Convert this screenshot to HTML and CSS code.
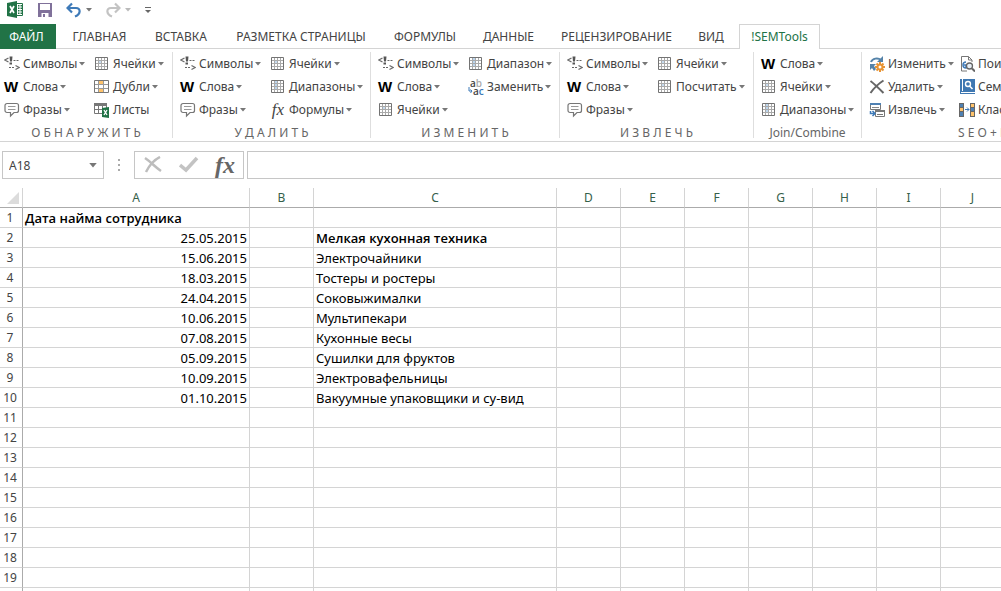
FILE: index.html
```html
<!DOCTYPE html>
<html lang="ru">
<head>
<meta charset="utf-8">
<title>Excel – !SEMTools</title>
<link rel="stylesheet" href="styles.css">
</head>
<body>
<svg class="sprite" aria-hidden="true">
  <symbol id="chars" viewBox="0 0 16 16"><path d="M4.500 2 0.800 4 4.500 6M11.500 9.500 15.200 11.500 11.500 13.500" fill="none" stroke="#6a6a6a" stroke-width="1.300"/><path d="M5.500 0.500h3l-.5 5h-2zM5.500 6.500H8v2H5.500z" fill="#555"/><path d="M9.500 4h2v1h-2zM12.500 4h2v1h-2zM5 11h2v1H5zM8 11h2v1H8z" fill="#666"/></symbol>
  <symbol id="phrase" viewBox="0 0 16 16"><path d="M3 1.500h9.500a2 2 0 0 1 2 2v5a2 2 0 0 1-2 2H10L6.500 14v-3.500H3a2 2 0 0 1-2-2v-5a2 2 0 0 1 2-2z" fill="#fff" stroke="#777" stroke-width="1.200"/><path d="M4 4.500h7.500M4 7.500h7.500" stroke="#999"/></symbol>
  <symbol id="cells" viewBox="1 0 16 16"><path d="M2 1h12v13H2z" fill="#fff"/><path d="M5 4h4v4H5z" fill="#c7dcf0"/><path d="M5.500 2v11M8.500 2v11M11.500 2v11M3 4.500h11M3 7.500h11M3 10.500h11" stroke="#aaa"/><path d="M2.500 1.500h12v12h-12z" fill="none" stroke="#737373"/></symbol>
  <symbol id="range" viewBox="1 0 16 16"><path d="M2 1h12v13H2z" fill="#fff"/><path d="M5 2h4v9H5z" fill="#bcd6ee"/><path d="M5.500 2v11M8.500 2v11M11.500 2v11M3 4.500h11M3 7.500h11M3 10.500h11" stroke="#aaa"/><path d="M2.500 1.500h12v12h-12z" fill="none" stroke="#737373"/></symbol>
  <symbol id="dupes" viewBox="1 0 16 16"><path d="M1.500 1.500h14v12h-14z" fill="#fff"/><path d="M6 2h5v3H6zM6 10h5v3H6z" fill="#ffc36b"/><path d="M5.500 2v11M10.500 2v11M2 5.500h13M2 9.500h13" stroke="#999"/><path d="M1.500 1.500h14v12h-14z" fill="none" stroke="#777"/></symbol>
  <symbol id="sheets" viewBox="1 0 16 16"><path d="M1.500 1.500h12v10h-12z" fill="#fff" stroke="#777"/><path d="M1 1h13v3H1z" fill="#777"/><path d="M5.500 4v7M9.500 4v7M1 7.500h12" stroke="#777"/><path d="M9 6l7-1v11l-7-1z" fill="#217346"/><path d="M11 8l3 5M14 8l-3 5" stroke="#fff" stroke-width="1.300"/></symbol>
  <symbol id="excel" viewBox="0 0 17 17"><path d="M9.500 2.500h6v12h-6z" fill="#fff" stroke="#217346"/><path d="M11 4h1.500v1.500H11zM13.500 4H15v1.500h-1.500zM11 6.500h1.500V8H11zM13.500 6.500H15V8h-1.500zM11 9h1.500v1.500H11zM13.500 9H15v1.500h-1.500zM11 11.500h1.500V13H11zM13.500 11.500H15V13h-1.500z" fill="#217346"/><path d="M0 2l10-2v17L0 15z" fill="#217346"/><path d="M3 5l4 7M7 5l-4 7" stroke="#fff" stroke-width="1.700"/></symbol>
  <symbol id="save" viewBox="0 0 16 16"><path d="M1 1h14v14H1z" fill="#80719a"/><path d="M3 2h10v6H3zM4.500 11h7v4h-7z" fill="#fff"/><path d="M6 12h2v3H6z" fill="#80719a"/></symbol>
  <symbol id="undo" viewBox="0 0 16 16"><path d="M1.500 6H10c5 0 5 6-1 8.500" fill="none" stroke="#3e7ab8" stroke-width="2.200"/><path d="M6 1.500 1.500 6 6 10.500" fill="none" stroke="#3e7ab8" stroke-width="2.200"/></symbol>
  <symbol id="redo" viewBox="0 0 16 16"><path d="M14.500 6H6c-5 0-5 6 1 8.500" fill="none" stroke="#c3c3c3" stroke-width="2.200"/><path d="M10 1.500 14.500 6 10 10.500" fill="none" stroke="#c3c3c3" stroke-width="2.200"/></symbol>
  <symbol id="custom" viewBox="0 0 8 8"><path d="M1 1.500h6" stroke="#666"/><path d="M1 4h6L4 7z" fill="#666"/></symbol>
  <symbol id="caret" viewBox="0 0 6 4"><path d="M0 0h6L3 3.500z" fill="#777"/></symbol>
  <symbol id="cycle" viewBox="0 0 16 16"><path d="M2 6a6 5 0 0 1 10-2" fill="none" stroke="#5583a9" stroke-width="2"/><path d="M14 0v6H8z" fill="#5583a9"/><path d="M1 8h6L5 10l2 3-2 2-2-3-2 2z" fill="#5583a9"/><path d="M11 6v10M6 11h10M7.500 7.500l7 7M14.500 7.500l-7 7" stroke="#e89434" stroke-width="2"/><circle cx="11" cy="11" r="3.500" fill="#e89434"/><circle cx="11" cy="11" r="1.500" fill="#fff"/></symbol>
  <symbol id="delete" viewBox="0 0 16 16"><path d="M1.500 2c4 3 8 7 13 12" fill="none" stroke="#666" stroke-width="2"/><path d="M14.500 1.500C9 5 5 9 1.500 14" fill="none" stroke="#666" stroke-width="2"/></symbol>
  <symbol id="extract" viewBox="0 0 16 16"><path d="M1.500 1.500h10v6h-10z" fill="#fff" stroke="#777"/><path d="M1 1h11v2H1z" fill="#4f81b3"/><path d="M3 5.500h7" stroke="#888"/><path d="M6.500 8.500h9v6h-9z" fill="#fff" stroke="#777"/><path d="M6 8h10v2H6zM8 12h6v1H8z" fill="#777"/><path d="M1.500 9v2.500H5M3.500 9 6 11.500 3.500 14" fill="none" stroke="#3e7ab8" stroke-width="1.500"/></symbol>
  <symbol id="find" viewBox="0 0 16 16"><path d="M8 15H2.500V.5h7L13 4v2M9.500.5V4H13" fill="none" stroke="#777"/><path d="M7 6a3 3 0 0 0 0 6V9H5" fill="none" stroke="#3e7ab8" stroke-width="1.500"/><circle cx="10.500" cy="10" r="3" fill="#e7eff7" stroke="#666" stroke-width="1.300"/><path d="M13 12.500l3 3" stroke="#666" stroke-width="2"/></symbol>
  <symbol id="book" viewBox="0 0 16 16"><path d="M1 0h15v15H1z" fill="#3f78b2"/><path d="M3.500 0v12M2 13.500h14" stroke="#fff"/><circle cx="9" cy="5" r="2.500" fill="none" stroke="#fff" stroke-width="1.400"/><path d="M10.500 7l3 3" stroke="#fff" stroke-width="1.600"/></symbol>
  <symbol id="classify" viewBox="0 0 16 16"><path d="M0 1h5v14H0zM11 1h5v14h-5z" fill="#666"/><path d="M1 2h3v3H1zM1 10h3v4H1zM12 6h3v3h-3z" fill="#4f81b3"/><path d="M1 6h3v3H1zM12 2h3v3h-3zM12 10h3v4h-3z" fill="#ffc36b"/><path d="M6 7.500h4M8 5.500l2 2-2 2" fill="none" stroke="#3e7ab8"/></symbol>
  <symbol id="arrow" viewBox="0 0 5 7"><path d="M1 0v4h3M2.500 2.500 4 4 2.500 6" fill="none" stroke="#3e7ab8"/></symbol>
  <symbol id="cancel" viewBox="0 0 18 18"><path d="M1 2c6 4 10 9 16 13M16 1C10 4 5 10 2 16" fill="none" stroke="#bdbdbd" stroke-width="2.500"/></symbol>
  <symbol id="enter" viewBox="0 0 20 18"><path d="M1 9l6 5L18 2" fill="none" stroke="#c3c3c3" stroke-width="3.500"/></symbol>
</svg>

<div class="window">
  <div class="quick">
    <svg class="excel"><use href="#excel"/></svg>
    <button class="tool" aria-label="Сохранить"><svg class="icon"><use href="#save"/></svg></button>
    <button class="tool" aria-label="Отменить"><svg class="icon"><use href="#undo"/></svg><svg class="caret"><use href="#caret"/></svg></button>
    <button class="tool" aria-label="Вернуть"><svg class="icon"><use href="#redo"/></svg><svg class="caret dim"><use href="#caret"/></svg></button>
    <button class="tool" aria-label="Настройка панели"><svg class="custom"><use href="#custom"/></svg></button>
  </div>

  <nav class="tabs">
    <button class="tab file">ФАЙЛ</button>
    <button class="tab">ГЛАВНАЯ</button>
    <button class="tab">ВСТАВКА</button>
    <button class="tab">РАЗМЕТКА СТРАНИЦЫ</button>
    <button class="tab">ФОРМУЛЫ</button>
    <button class="tab">ДАННЫЕ</button>
    <button class="tab">РЕЦЕНЗИРОВАНИЕ</button>
    <button class="tab">ВИД</button>
    <button class="tab active">!SEMTools</button>
  </nav>

  <div class="ribbon">
    <section class="group detect">
      <div class="commands">
        <button class="cmd"><svg class="icon"><use href="#chars"/></svg>Символы<svg class="caret"><use href="#caret"/></svg></button>
        <button class="cmd"><b class="icon word">W</b>Слова<svg class="caret"><use href="#caret"/></svg></button>
        <button class="cmd"><svg class="icon"><use href="#phrase"/></svg>Фразы<svg class="caret"><use href="#caret"/></svg></button>
        <button class="cmd"><svg class="icon"><use href="#cells"/></svg>Ячейки<svg class="caret"><use href="#caret"/></svg></button>
        <button class="cmd"><svg class="icon"><use href="#dupes"/></svg>Дубли<svg class="caret"><use href="#caret"/></svg></button>
        <button class="cmd"><svg class="icon"><use href="#sheets"/></svg>Листы</button>
      </div>
      <div class="caption">О Б Н А Р У Ж И Т Ь</div>
    </section>
    <section class="group remove">
      <div class="commands">
        <button class="cmd"><svg class="icon"><use href="#chars"/></svg>Символы<svg class="caret"><use href="#caret"/></svg></button>
        <button class="cmd"><b class="icon word">W</b>Слова<svg class="caret"><use href="#caret"/></svg></button>
        <button class="cmd"><svg class="icon"><use href="#phrase"/></svg>Фразы<svg class="caret"><use href="#caret"/></svg></button>
        <button class="cmd"><svg class="icon"><use href="#cells"/></svg>Ячейки<svg class="caret"><use href="#caret"/></svg></button>
        <button class="cmd"><svg class="icon"><use href="#range"/></svg>Диапазоны<svg class="caret"><use href="#caret"/></svg></button>
        <button class="cmd"><i class="icon fx">fx</i>Формулы<svg class="caret"><use href="#caret"/></svg></button>
      </div>
      <div class="caption">У Д А Л И Т Ь</div>
    </section>
    <section class="group change">
      <div class="commands">
        <button class="cmd"><svg class="icon"><use href="#chars"/></svg>Символы<svg class="caret"><use href="#caret"/></svg></button>
        <button class="cmd"><b class="icon word">W</b>Слова<svg class="caret"><use href="#caret"/></svg></button>
        <button class="cmd"><svg class="icon"><use href="#cells"/></svg>Ячейки<svg class="caret"><use href="#caret"/></svg></button>
        <button class="cmd"><svg class="icon"><use href="#range"/></svg>Диапазон<svg class="caret"><use href="#caret"/></svg></button>
        <button class="cmd"><span class="icon replace"><span>a<span class="pale">b</span></span><span class="under"><svg class="arrow"><use href="#arrow"/></svg>a<span class="blue">c</span></span></span>Заменить<svg class="caret"><use href="#caret"/></svg></button>
      </div>
      <div class="caption">И З М Е Н И Т Ь</div>
    </section>
    <section class="group pull">
      <div class="commands">
        <button class="cmd"><svg class="icon"><use href="#chars"/></svg>Символы<svg class="caret"><use href="#caret"/></svg></button>
        <button class="cmd"><b class="icon word">W</b>Слова<svg class="caret"><use href="#caret"/></svg></button>
        <button class="cmd"><svg class="icon"><use href="#phrase"/></svg>Фразы<svg class="caret"><use href="#caret"/></svg></button>
        <button class="cmd"><svg class="icon"><use href="#cells"/></svg>Ячейки<svg class="caret"><use href="#caret"/></svg></button>
        <button class="cmd"><svg class="icon"><use href="#cells"/></svg>Посчитать<svg class="caret"><use href="#caret"/></svg></button>
      </div>
      <div class="caption">И З В Л Е Ч Ь</div>
    </section>
    <section class="group join">
      <div class="commands">
        <button class="cmd"><b class="icon word">W</b>Слова<svg class="caret"><use href="#caret"/></svg></button>
        <button class="cmd"><svg class="icon"><use href="#cells"/></svg>Ячейки<svg class="caret"><use href="#caret"/></svg></button>
        <button class="cmd"><svg class="icon"><use href="#range"/></svg>Диапазоны<svg class="caret"><use href="#caret"/></svg></button>
      </div>
      <div class="caption">Join/Combine</div>
    </section>
    <section class="group seo">
      <div class="commands">
        <button class="cmd"><svg class="icon"><use href="#cycle"/></svg>Изменить<svg class="caret"><use href="#caret"/></svg></button>
        <button class="cmd"><svg class="icon"><use href="#delete"/></svg>Удалить<svg class="caret"><use href="#caret"/></svg></button>
        <button class="cmd"><svg class="icon"><use href="#extract"/></svg>Извлечь<svg class="caret"><use href="#caret"/></svg></button>
        <button class="cmd"><svg class="icon"><use href="#find"/></svg>Поиск</button>
        <button class="cmd"><svg class="icon"><use href="#book"/></svg>Семантика</button>
        <button class="cmd"><svg class="icon"><use href="#classify"/></svg>Классификация</button>
      </div>
      <div class="caption">S E O + К</div>
    </section>
  </div>

  <div class="formula-bar">
    <div class="name-box"><input class="name" aria-label="Имя ячейки" value="A18"><button class="drop" aria-label="Список имён"><svg><use href="#caret"/></svg></button></div>
    <div class="grip"><i></i><i></i><i></i></div>
    <div class="edit">
      <button aria-label="Отмена"><svg class="cancel"><use href="#cancel"/></svg></button>
      <button aria-label="Ввод"><svg class="enter"><use href="#enter"/></svg></button>
      <button class="insert">fx</button>
    </div>
    <input class="formula" aria-label="Строка формул">
  </div>

  <div class="sheet">
    <table class="grid">
      <colgroup><col class="c-num"><col class="c-a"><col class="c-b"><col class="c-c"><col span="10" class="c-n"></colgroup>
      <thead><tr><th class="corner"><svg viewBox="0 0 12 12"><path d="M12 0v12H0z" fill="#dcdcdc"/></svg></th><th>A</th><th>B</th><th>C</th><th>D</th><th>E</th><th>F</th><th>G</th><th>H</th><th>I</th><th>J</th><th>K</th><th>L</th><th>M</th></tr></thead>
      <tbody>
        <tr><th>1<td class="strong">Дата найма сотрудника<td><td><td><td><td><td><td><td><td><td><td><td></tr>
        <tr><th>2<td class="date">25.05.2015<td><td class="strong">Мелкая кухонная техника<td><td><td><td><td><td><td><td><td><td></tr>
        <tr><th>3<td class="date">15.06.2015<td><td>Электрочайники<td><td><td><td><td><td><td><td><td><td></tr>
        <tr><th>4<td class="date">18.03.2015<td><td>Тостеры и ростеры<td><td><td><td><td><td><td><td><td><td></tr>
        <tr><th>5<td class="date">24.04.2015<td><td>Соковыжималки<td><td><td><td><td><td><td><td><td><td></tr>
        <tr><th>6<td class="date">10.06.2015<td><td>Мультипекари<td><td><td><td><td><td><td><td><td><td></tr>
        <tr><th>7<td class="date">07.08.2015<td><td>Кухонные весы<td><td><td><td><td><td><td><td><td><td></tr>
        <tr><th>8<td class="date">05.09.2015<td><td>Сушилки для фруктов<td><td><td><td><td><td><td><td><td><td></tr>
        <tr><th>9<td class="date">10.09.2015<td><td>Электровафельницы<td><td><td><td><td><td><td><td><td><td></tr>
        <tr><th>10<td class="date">01.10.2015<td><td>Вакуумные упаковщики и су-вид<td><td><td><td><td><td><td><td><td><td></tr>
        <tr><th>11<td><td><td><td><td><td><td><td><td><td><td><td><td></tr>
        <tr><th>12<td><td><td><td><td><td><td><td><td><td><td><td><td></tr>
        <tr><th>13<td><td><td><td><td><td><td><td><td><td><td><td><td></tr>
        <tr><th>14<td><td><td><td><td><td><td><td><td><td><td><td><td></tr>
        <tr><th>15<td><td><td><td><td><td><td><td><td><td><td><td><td></tr>
        <tr><th>16<td><td><td><td><td><td><td><td><td><td><td><td><td></tr>
        <tr><th>17<td><td><td><td><td><td><td><td><td><td><td><td><td></tr>
        <tr><th>18<td><td><td><td><td><td><td><td><td><td><td><td><td></tr>
        <tr><th>19<td><td><td><td><td><td><td><td><td><td><td><td><td></tr>
        <tr><th><td><td><td><td><td><td><td><td><td><td><td><td><td></tr>
      </tbody>
    </table>
  </div>
</div>
</body>
</html>
```
FILE: styles.css
```css
* { box-sizing: border-box; }
body { margin: 0; background: #fff; color: #444; font: 12px/16px "Noto Sans", "Open Sans", sans-serif; }
button, input { font: inherit; color: inherit; background: none; border: 0; padding: 0; margin: 0; border-radius: 0; }
svg { display: block; flex: none; }
.sprite { display: none; }
.window { display: flex; flex-direction: column; height: 100vh; overflow: hidden; }

.icon { width: 16px; height: 16px; flex: none; }
.caret { width: 6px; height: 4px; }
.dim { opacity: .5; }

.quick { display: flex; align-items: center; gap: 13px; height: 24px; padding: 0 0 5px 7px; flex: none; }
.excel { width: 17px; height: 17px; }
.tool { display: flex; align-items: center; gap: 4px; }
.custom { width: 8px; height: 8px; }

.tabs { display: grid; grid-template-columns: 56px 87px 76px 164px 84px 83px 133px 56px 81px; height: 25px; flex: none; border-bottom: 1px solid #d4d4d4; }
.tab { height: 25px; white-space: nowrap; text-align: center; }
.file { background: #217346; color: #fff; padding-right: 3px; }
.active { background: #fff; color: #217346; border: 1px solid #d4d4d4; border-bottom: 0; }

.ribbon { display: flex; flex: none; padding: 3px 0 0; border-bottom: 1px solid #d4d4d4; overflow: hidden; }
.group { flex: none; border-right: 1px solid #dedede; margin-bottom: 3px; }
.detect { width: 173px; }
.remove { width: 198px; }
.change { width: 189px; }
.pull { width: 194px; }
.join { width: 108px; }
.seo { flex: 1 0 240px; border-right: 0; }
.commands { display: grid; grid-template-rows: repeat(3, 23px); grid-template-columns: 90px 1fr; grid-auto-flow: column; padding-left: 7px; }
.detect .commands { padding-left: 4px; }
.cmd { display: flex; align-items: center; gap: 3px; white-space: nowrap; }
.cmd .caret { margin-left: -1px; }
.caption { height: 17px; padding-top: 4px; text-align: center; line-height: 16px; color: #666; }
.seo .caption { text-align: left; padding-left: 96px; }
.word { color: #000; font: bold 15px/16px "Liberation Sans", sans-serif; text-align: left; }
.fx { font: italic 17px/16px "Liberation Serif", serif; text-align: center; }
.replace { display: flex; flex-direction: column; font: 600 10px/8px "Open Sans", sans-serif; }
.under { display: flex; align-items: center; }
.arrow { width: 5px; height: 7px; }
.pale { color: #aaa; }
.blue { color: #3e7ab8; }

.formula-bar { display: flex; height: 46px; padding: 9px 0 9px 2px; flex: none; }
.name-box { display: flex; width: 102px; border: 1px solid #c6c6c6; }
.name { flex: 1; min-width: 0; padding: 2px 0 0 6px; }
.drop { width: 20px; display: grid; place-items: center; }
.drop svg { width: 8px; height: 5px; }
.grip { width: 30px; display: flex; flex-direction: column; align-items: center; justify-content: center; gap: 3px; }
.grip i { width: 2px; height: 2px; background: #aaa; }
.edit { width: 110px; display: grid; grid-template-columns: repeat(3, 1fr); place-items: center; border: 1px solid #c6c6c6; }
.cancel { width: 18px; height: 18px; }
.enter { width: 20px; height: 18px; }
.insert { font: italic bold 24px/24px "Liberation Serif", serif; color: #666; }
.formula { flex: 1; min-width: 0; margin-left: 3px; padding: 0 6px; border: 1px solid #c6c6c6; border-right: 0; }

.sheet { flex: 1; min-height: 0; overflow: hidden; }
.grid { table-layout: fixed; width: 1px; border-collapse: separate; border-spacing: 0; font: 13px/18px "Noto Sans", sans-serif; color: #000; }
.c-num { width: 23px; }
.c-a { width: 227px; }
.c-b { width: 64px; }
.c-c { width: 243px; }
.c-n { width: 64px; }
.grid th { height: 20px; padding: 0; font-size: 12px; font-weight: 400; color: #444; border-right: 1px solid #d4d4d4; border-bottom: 1px solid #d4d4d4; text-align: center; }
.grid thead th { color: #35604a; border-bottom-color: #ababab; }
.grid tbody th { border-right-color: #ababab; padding-right: 2px; }
.corner svg { width: 12px; height: 12px; margin-left: 7px; }
.grid td { height: 20px; padding: 0 2px; border-right: 1px solid #d4d4d4; border-bottom: 1px solid #d4d4d4; white-space: nowrap; }
.grid .strong { font-family: "Open Sans", sans-serif; font-weight: 600; }
.date { text-align: right; }
```
